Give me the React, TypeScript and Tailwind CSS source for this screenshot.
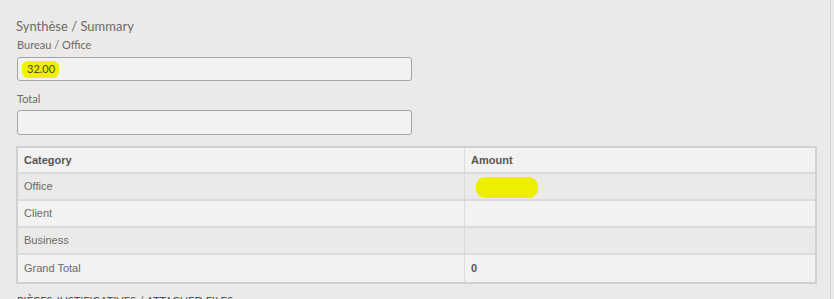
import React from "react";

const rows = [
  { cat: "Office", amt: "hl", bg: "bg-[#ebeae8]" },
  { cat: "Client", amt: "", bg: "bg-[#f2f2f2]" },
  { cat: "Business", amt: "", bg: "bg-[#ebeae8]" },
  { cat: "Grand Total", amt: "0", bg: "bg-[#f2f2f2]" },
];

export default function App() {
  return (
    <div className="w-[834px] h-[299px] overflow-hidden bg-[#ebeae8] flex">
      <div className="w-[831px] h-full shrink-0 border-r border-[#d4d3d1] pl-[16px] pr-[13px] pt-[16px]" style={{ fontFamily: "Lato, 'Open Sans', sans-serif" }}>
        <div className="text-[13px] leading-[20px] text-[#6a6a6a]">Synthèse / Summary</div>
        <div className="mt-[2px] pl-[1px] text-[11px] leading-[14px] text-[#6a6a6a]">Bureau / Office</div>
        <div className="mt-[5px] ml-[1px] w-[395px] h-[24px] border border-[#a5a5a5] rounded-[3px] bg-[#f2f2f2] relative flex items-center">
          <span className="absolute left-[4px] top-[3px] w-[37px] h-[17px] bg-[#f0f000] rounded-[6px]" />
          <span className="relative ml-[9px] text-[11px] text-[#4a4a20]">32.00</span>
        </div>
        <div className="mt-[11px] pl-[1px] text-[11px] leading-[14px] text-[#6a6a6a]">Total</div>
        <div className="mt-[4px] ml-[1px] w-[395px] h-[25px] border border-[#a5a5a5] rounded-[3px] bg-[#f2f2f2]" />
        <div className="mt-[11px] w-[801px] border-2 border-[#d0d0d0]" style={{ fontFamily: "'Liberation Sans', Arial, sans-serif" }}>
          <div className="flex h-[26px] bg-[#f2f2f2] border-b-2 border-[#dcdbd9] text-[11px] font-bold text-[#555]">
            <div className="w-[447px] border-r border-[#dcdbd9] flex items-center pl-[6px]">Category</div>
            <div className="flex-1 flex items-center pl-[6px]">Amount</div>
          </div>
          {rows.map((r, i) => (
            <div key={r.cat} className={`flex h-[27px] ${r.bg} ${i < rows.length - 1 ? "border-b-2 border-[#dcdbd9]" : ""} text-[11px] text-[#6a6a6a]`}>
              <div className="w-[447px] border-r border-[#dcdbd9] flex items-center pl-[6px]">{r.cat}</div>
              <div className="flex-1 flex items-center pl-[6px] relative">
                {r.amt === "hl" ? (
                  <span className="absolute left-[11px] top-[3px] w-[62px] h-[21px] bg-[#eeee00] rounded-[9px]" />
                ) : (
                  <span className="font-bold text-[#555]">{r.amt}</span>
                )}
              </div>
            </div>
          ))}
        </div>
        <div className="mt-[10px] pl-[1px] text-[11px] leading-[14px] text-[#555] whitespace-nowrap">PIÈCES JUSTIFICATIVES / ATTACHED FILES</div>
      </div>
    </div>
  );
}
